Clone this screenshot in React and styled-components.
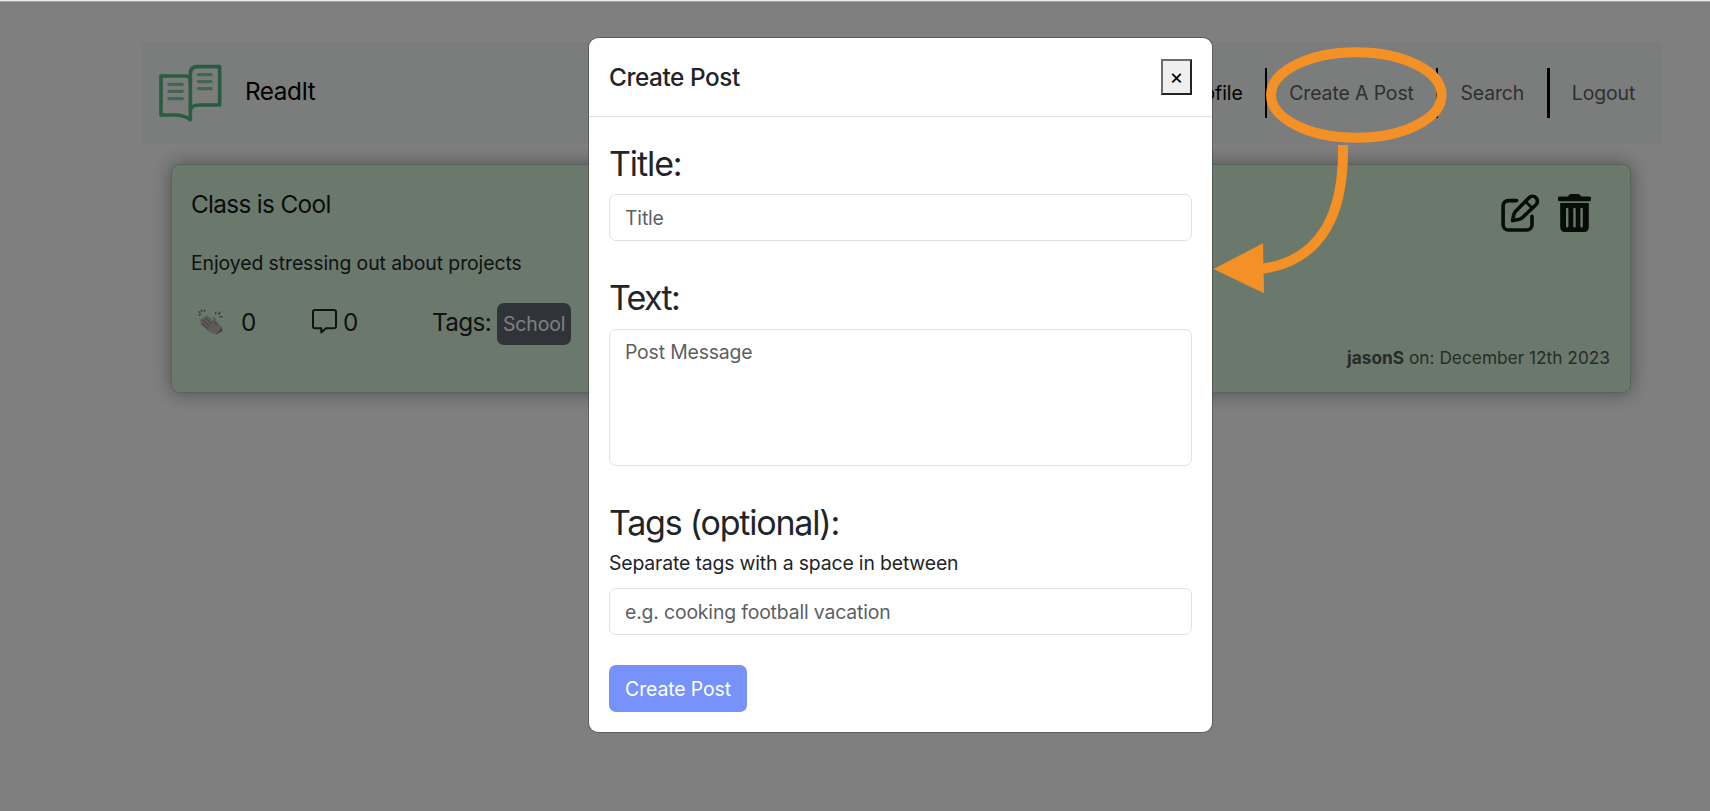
import React from "react";
import styled, { createGlobalStyle } from "styled-components";

const GlobalStyle = createGlobalStyle`
  *, *::before, *::after { box-sizing: border-box; }
  body {
    margin: 0;
    overflow: hidden;
    background: #fff;
    color: #212529;
    font-family: Inter, "Liberation Sans", sans-serif;
    font-size: 19.4px;
    line-height: 30px;
  }
  h1, h2, h5, p { margin: 0; }
`;

const Page = styled.div`
  height: 811px;
  padding: 42px 49px 0 141px;
`;

const Header = styled.header`
  display: flex;
  align-items: center;
  width: 1520px;
  height: 102px;
  padding: 0 3.5px 0 18px;
  background: #f5fbf8;
`;

const Brand = styled.div`
  display: flex;
  align-items: center;
  gap: 22px;
  padding-top: 1px;
`;

const BrandName = styled.h1`
  padding-bottom: 6px;
  color: #000;
  font-size: 24.3px;
  font-weight: 400;
  letter-spacing: -0.45px;
`;

const Nav = styled.nav`
  display: flex;
  margin-left: auto;
`;

const NavItem = styled.a`
  display: flex;
  align-items: center;
  height: 50px;
  padding: 0 22.3px 1px;
  border-left: ${(p) => (p.$divider ? `${p.$divider}px solid #000` : "0")};
  color: ${(p) => (p.$active ? "#000" : "#5e6060")};
  letter-spacing: -0.09px;
`;

const Card = styled.article`
  display: flex;
  justify-content: space-between;
  width: 1460px;
  height: 229px;
  margin: 20px 0 0 30px;
  padding: 0 20px 0 19px;
  border: 1px solid #b4c9b7;
  border-radius: 8px;
  background: #d7f2da;
  box-shadow: 0 0 20px rgba(0, 0, 0, 0.38);
`;

const CardMain = styled.div`
  display: flex;
  flex-direction: column;
  padding-top: 24px;
`;

const CardTitle = styled.h2`
  color: #101814;
  font-size: 24.3px;
  font-weight: 400;
  letter-spacing: -0.65px;
`;

const CardText = styled.p`
  margin-top: 29px;
  letter-spacing: -0.08px;
`;

const Stats = styled.div`
  display: flex;
  align-items: baseline;
  margin-top: 25px;
  font-size: 24.3px;
`;

const Claps = styled.div`
  display: flex;
  align-items: baseline;
  gap: 18px;
  width: 120px;
  padding-left: 7px;
  svg { transform: translateY(4px); }
`;

const Comments = styled.div`
  display: flex;
  align-items: baseline;
  gap: 6px;
  width: 121px;
  padding-left: 1px;
  svg { transform: translateY(3px); }
`;

const Tags = styled.div`
  display: flex;
  align-items: baseline;
  gap: 6px;
  letter-spacing: -0.65px;
`;

const Tag = styled.span`
  height: 42px;
  padding: 6px;
  border-radius: 7px;
  background: #606670;
  color: #fff;
  font-size: 19.4px;
  letter-spacing: -0.1px;
`;

const CardSide = styled.div`
  display: flex;
  flex-direction: column;
  justify-content: space-between;
  align-items: flex-end;
  padding: 29px 0 21px;
`;

const Actions = styled.div`
  display: flex;
  gap: 18px;
  padding-right: 19px;
  color: #0c1810;
`;

const Meta = styled.div`
  color: #4f5850;
  font-size: 17.3px;
  line-height: 26px;
`;

const Overlay = styled.div`
  position: absolute;
  inset: 0;
  display: flex;
  justify-content: center;
  align-items: flex-start;
  padding: 38px 0 0 91px;
  border-top: 1px solid #eeebe6;
  background: rgba(0, 0, 0, 0.5);
  background-clip: padding-box;
  box-shadow: inset 0 1px 0 rgba(255, 255, 255, 0.3);
`;

const Modal = styled.section`
  width: 623px;
  margin: -1px 0 0;
  border-radius: 9px;
  background: #fff;
  box-shadow: 0 0 0 1px rgba(0, 0, 0, 0.25);
`;

const ModalHeader = styled.div`
  display: flex;
  align-items: center;
  justify-content: space-between;
  height: 79px;
  padding: 0 20px;
  border-bottom: 1px solid #dee2e6;
`;

const ModalTitle = styled.h5`
  font-size: 24.3px;
  font-weight: 500;
  letter-spacing: -0.4px;
`;

const CloseButton = styled.button`
  width: 31px;
  height: 36px;
  padding: 0;
  border: 2px solid;
  border-color: #6b6e70 #212529 #212529 #6b6e70;
  background: #efefef;
  color: #000;
  font: 400 21px/30px Inter, sans-serif;
  display: flex;
  align-items: center;
  justify-content: center;
`;

const Form = styled.form`
  display: flex;
  flex-direction: column;
  align-items: stretch;
  padding: 26px 20px 20px;
`;

const Field = styled.div`
  display: flex;
  flex-direction: column;
  margin-bottom: ${(p) => p.$space}px;
`;

const Label = styled.label`
  margin-bottom: ${(p) => p.$gap ?? 10}px;
  font-size: 34px;
  font-weight: 430;
  line-height: 42px;
  letter-spacing: ${(p) => p.$tracking}px;
`;

const Hint = styled.p`
  margin-bottom: 10px;
  letter-spacing: -0.15px;
`;

const Input = styled.input`
  height: ${(p) => p.$height ?? 47}px;
  padding: 7px 15px;
  border: 1px solid #dee2e6;
  border-radius: 7px;
  background: #fff;
  font: 400 19.4px/30px Inter, sans-serif;
  letter-spacing: -0.16px;
  resize: none;
  outline: none;
  &::placeholder { color: #5c5f62; opacity: 1; }
`;

const SubmitButton = styled.button`
  align-self: flex-start;
  width: 138px;
  height: 47px;
  padding: 0;
  border: 0;
  border-radius: 7px;
  background: #7793fb;
  color: #fff;
  font: 400 19.4px/30px Inter, sans-serif;
  letter-spacing: -0.1px;
`;

const Annotation = styled.svg`
  position: absolute;
  top: 40px;
  left: 1200px;
`;

const BookIcon = () => (
  <svg width="64" height="60" viewBox="28 26 192 180" fill="none" strokeLinejoin="round" strokeLinecap="round">
    <g stroke="#56b882" strokeWidth="11">
      <path d="M122 193V74Q121 62 104 62H34V179H80Q104 180 122 193" />
      <path d="M122 80V55Q122 34 143 34H210V149H150Q124 149 122 164" />
    </g>
    <path stroke="#86cda6" strokeWidth="10" d="M58 87H98M58 108H98M58 130H98M146 58H184M146 79H184M146 100H184" />
  </svg>
);

const ClapIcon = () => (
  <svg width="25" height="26" viewBox="0 0 25 26">
    <g stroke="#7d7e84" strokeWidth="1.5" strokeLinecap="round">
      <path d="M.8 2.9L1.8 3.2M3.3 1L3.7 2.1M6.8.9L6.3 2.4M1.2 6L2.5 5.4M17.8 3.2L17.6 4.8M22 3.2L20.6 5.2M24 7.8L22 7.8" />
    </g>
    <path
      d="M2 11.5Q2.2 9.8 4 10.2L4.5 10.6Q3.8 8.4 5.7 8.1L7 8.7Q6.6 6.6 8.5 6.6Q9.5 6.6 15.8 12.3Q14 8.2 15.7 7.8Q17.5 7.5 18.5 11.8Q19.5 14.3 23 16.5Q24.5 18.5 24.2 22L18.5 25.2Q13.5 24.8 9.5 21.5L3.2 16Q1.5 14.3 3.1 13.5Z"
      fill="#bab6b9"
    />
    <path
      d="M4.2 10.7L12 17.5M3.3 13.7L10.3 19.8M7 8.8L14 15M15.8 12.3Q17 14.5 19 15.7"
      stroke="#737176"
      strokeWidth=".9"
      fill="none"
      strokeLinecap="round"
    />
    <path d="M24 17.5L24.2 22L18.5 25.2L17.8 24.7Q23 22 24 17.5Z" fill="#77747a" />
  </svg>
);

const CommentIcon = () => (
  <svg width="25" height="25" viewBox="0 0 25 25" fill="none" stroke="#1c2520" strokeWidth="2" strokeLinejoin="round">
    <path d="M3 1H22A2 2 0 0 1 24 3V17.3A2 2 0 0 1 22 19.3H14L9.3 23.4V19.3H3A2 2 0 0 1 1 17.3V3A2 2 0 0 1 3 1Z" />
  </svg>
);

const EditIcon = () => (
  <svg width="39" height="38" viewBox="0 0 39 38" fill="none" stroke="currentColor" strokeWidth="3.6" strokeLinecap="round" strokeLinejoin="round">
    <path d="M15.6 6.6H7.3a5.2 5.2 0 0 0-5.2 5.2V30.8a5.2 5.2 0 0 0 5.2 5.2h18.5a5.2 5.2 0 0 0 5.2-5.2V22.3" />
    <path d="M11.6 26.6L12.6 21.3Q13 19 14.7 17.3L28 3.7A4.9 4.9 0 0 1 35 10.7L21.2 23.8Q19.7 25.2 17.4 25.6Z" />
    <path d="M24.6 7.5L31 13.9" strokeWidth="2.8" />
  </svg>
);

const TrashIcon = () => (
  <svg width="33" height="38" viewBox="0 0 33 38" fill="currentColor">
    <path d="M10 2.6Q10.4.1 13 .1H20Q22.6.1 23 2.6H31A2.2 2.2 0 0 1 31 7.2H2A2.2 2.2 0 0 1 2 2.6Z" />
    <path
      fillRule="evenodd"
      d="M2.2 9H30.8V33Q30.8 38 26 38H7Q2.2 38 2.2 33ZM8 15V32.2a1.2 1.2 0 0 0 2.4 0V15a1.2 1.2 0 0 0-2.4 0ZM15.3 15V32.2a1.2 1.2 0 0 0 2.4 0V15a1.2 1.2 0 0 0-2.4 0ZM22.4 15V32.2a1.2 1.2 0 0 0 2.4 0V15a1.2 1.2 0 0 0-2.4 0Z"
    />
  </svg>
);

export default function App() {
  return (
    <>
      <GlobalStyle />
      <Page>
        <Header>
          <Brand>
            <BookIcon />
            <BrandName>ReadIt</BrandName>
          </Brand>
          <Nav>
            <NavItem $active>Profile</NavItem>
            <NavItem $divider={2}>Create A Post</NavItem>
            <NavItem $divider={2}>Search</NavItem>
            <NavItem $divider={3}>Logout</NavItem>
          </Nav>
        </Header>
        <Card>
          <CardMain>
            <CardTitle>Class is Cool</CardTitle>
            <CardText>Enjoyed stressing out about projects</CardText>
            <Stats>
              <Claps><ClapIcon />0</Claps>
              <Comments><CommentIcon />0</Comments>
              <Tags>Tags: <Tag>School</Tag></Tags>
            </Stats>
          </CardMain>
          <CardSide>
            <Actions>
              <EditIcon />
              <TrashIcon />
            </Actions>
            <Meta><b>jasonS</b> on: December 12th 2023</Meta>
          </CardSide>
        </Card>
      </Page>
      <Overlay>
        <Modal>
          <ModalHeader>
            <ModalTitle>Create Post</ModalTitle>
            <CloseButton type="button">×</CloseButton>
          </ModalHeader>
          <Form>
            <Field $space={36}>
              <Label $gap={9} $tracking={-1.1}>Title:</Label>
              <Input placeholder="Title" />
            </Field>
            <Field $space={36}>
              <Label $tracking={-1.7}>Text:</Label>
              <Input as="textarea" $height={137} placeholder="Post Message" />
            </Field>
            <Field $space={30}>
              <Label $gap={4} $tracking={-1.22}>Tags (optional):</Label>
              <Hint>Separate tags with a space in between</Hint>
              <Input placeholder="e.g. cooking football vacation" />
            </Field>
            <SubmitButton type="button">Create Post</SubmitButton>
          </Form>
        </Modal>
      </Overlay>
      <Annotation width="260" height="270" viewBox="1200 40 260 270">
        <g fill="none" stroke="#f39026" strokeWidth="10">
          <ellipse cx="1356.3" cy="95" rx="85.3" ry="42.7" />
          <path d="M1343 145C1343.500 175 1340 205 1326 228.500C1312 252 1290 265 1262 268.700" />
        </g>
        <path fill="#f39026" d="M1213.500 269L1263 243.300L1264 293.300Z" />
      </Annotation>
    </>
  );
}
